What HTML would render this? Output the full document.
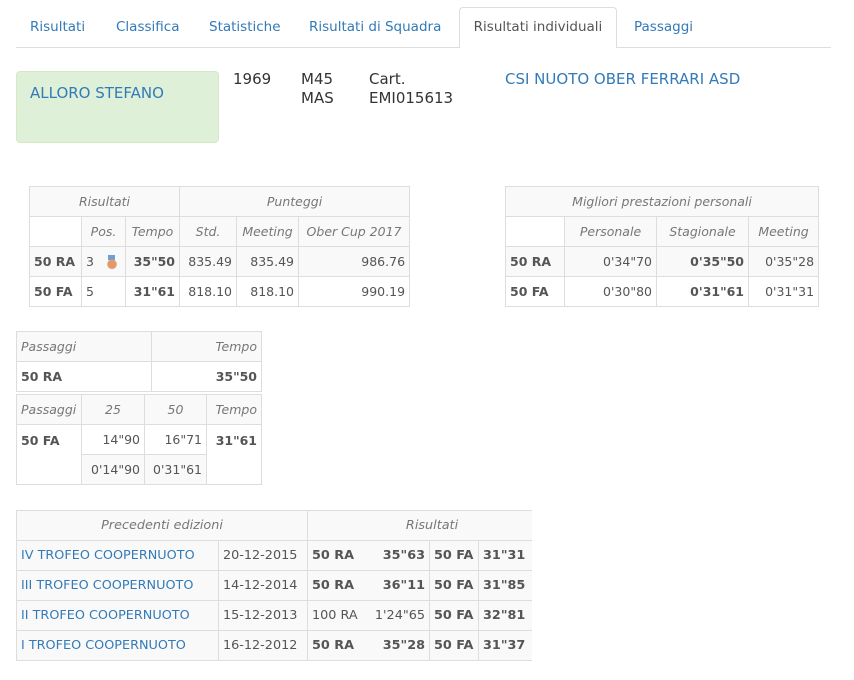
<!DOCTYPE html>
<html><head><meta charset="utf-8"><style>
body{margin:0;background:#fff;font-family:"DejaVu Sans","Liberation Sans",sans-serif;color:#555;width:854px;height:673px;position:relative;overflow:hidden}
a{color:#337ab7;text-decoration:none}
.nav{position:absolute;left:16px;top:47px;width:815px;border-top:1px solid #ddd}
.tab{position:absolute;top:19px;font-size:13.5px;color:#337ab7}
.act{position:absolute;left:459px;top:7px;width:158px;height:41px;border:1px solid #ddd;border-bottom:none;background:#fff;border-radius:4px 4px 0 0;font-size:13.5px;color:#555;box-sizing:border-box;padding-top:11px;text-align:center}
.green{position:absolute;left:16px;top:71px;width:203px;height:72px;box-sizing:border-box;background:#dff0d8;border:1px solid #d6e9c6;border-radius:4px;padding:12px 13px;font-size:15px;color:#337ab7}
.info{position:absolute;top:70px;font-size:15px;color:#333;line-height:19px}
table{position:absolute;border-collapse:collapse;table-layout:fixed;font-size:12.5px}
td{border:1px solid #ddd;padding:0 4px;height:29px;white-space:nowrap;overflow:hidden}
.h td,td.h{background:#f9f9f9;font-style:italic;color:#777}
.s td{background:#f9f9f9}
.c{text-align:center}.r{text-align:right}.b{font-weight:bold}
.t4{font-size:12.8px}
</style></head><body>
<span class="tab" style="left:30px">Risultati</span>
<span class="tab" style="left:116px">Classifica</span>
<span class="tab" style="left:209px">Statistiche</span>
<span class="tab" style="left:309px">Risultati di Squadra</span>
<span class="tab" style="left:634px">Passaggi</span>
<div class="nav"></div>
<div class="act">Risultati individuali</div>

<div class="green">ALLORO STEFANO</div>
<div class="info" style="left:233px">1969</div>
<div class="info" style="left:301px">M45<br>MAS</div>
<div class="info" style="left:369px">Cart.<br>EMI015613</div>
<div class="info" style="left:505px;color:#337ab7">CSI NUOTO OBER FERRARI ASD</div>

<table style="left:29px;top:186px;width:381px">
<col style="width:52px"><col style="width:44px"><col style="width:54px"><col style="width:57px"><col style="width:62px"><col style="width:111px">
<tr class="h"><td colspan="3" class="c">Risultati</td><td colspan="3" class="c">Punteggi</td></tr>
<tr><td></td><td class="c h">Pos.</td><td class="c h">Tempo</td><td class="c h">Std.</td><td class="c h">Meeting</td><td class="c h">Ober Cup 2017</td></tr>
<tr class="s"><td class="b">50 RA</td><td>3 <span style="display:inline-block;width:12px;height:14px;margin-left:8px;vertical-align:-3px;background:radial-gradient(circle at 50% 66%,#e39a6a 0 4.5px,transparent 5px),linear-gradient(#6fa0d0,#6fa0d0) center top/7px 5px no-repeat"></span></td><td class="r b">35"50</td><td class="r">835.49</td><td class="r">835.49</td><td class="r">986.76</td></tr>
<tr><td class="b">50 FA</td><td>5</td><td class="r b">31"61</td><td class="r">818.10</td><td class="r">818.10</td><td class="r">990.19</td></tr>
</table>

<table style="left:505px;top:186px;width:313px">
<col style="width:59px"><col style="width:92px"><col style="width:92px"><col style="width:70px">
<tr class="h"><td colspan="4" class="c">Migliori prestazioni personali</td></tr>
<tr><td></td><td class="c h">Personale</td><td class="c h">Stagionale</td><td class="c h">Meeting</td></tr>
<tr class="s"><td class="b">50 RA</td><td class="r">0'34"70</td><td class="r b">0'35"50</td><td class="r">0'35"28</td></tr>
<tr><td class="b">50 FA</td><td class="r">0'30"80</td><td class="r b">0'31"61</td><td class="r">0'31"31</td></tr>
</table>

<table style="left:16px;top:331px;width:245px">
<col style="width:135px"><col style="width:110px">
<tr class="h"><td>Passaggi</td><td class="r">Tempo</td></tr>
<tr><td class="b">50 RA</td><td class="r b">35"50</td></tr>
</table>
<table style="left:16px;top:394px;width:245px">
<col style="width:65px"><col style="width:63px"><col style="width:62px"><col style="width:55px">
<tr class="h"><td>Passaggi</td><td class="c">25</td><td class="c">50</td><td class="r">Tempo</td></tr>
<tr><td class="b" rowspan="2" style="vertical-align:top;padding-top:8px">50 FA</td><td class="r">14"90</td><td class="r">16"71</td><td class="r b" rowspan="2" style="vertical-align:top;padding-top:8px">31"61</td></tr>
<tr class="s"><td class="r">0'14"90</td><td class="r">0'31"61</td></tr>
</table>

<table class="t4" style="left:16px;top:510px;width:540px">
<col style="width:202px"><col style="width:89px"><col style="width:53px"><col style="width:69px"><col style="width:49px"><col style="width:78px">
<tr class="h"><td colspan="2" class="c">Precedenti edizioni</td><td colspan="4" class="c">Risultati</td></tr>
<tr class="s"><td><a>IV TROFEO COOPERNUOTO</a></td><td>20-12-2015</td><td class="b" style="border-right:none">50 RA</td><td class="r b" style="border-left:none">35"63</td><td class="b">50 FA</td><td class="b">31"31</td></tr>
<tr class="s"><td><a>III TROFEO COOPERNUOTO</a></td><td>14-12-2014</td><td class="b" style="border-right:none">50 RA</td><td class="r b" style="border-left:none">36"11</td><td class="b">50 FA</td><td class="b">31"85</td></tr>
<tr class="s"><td><a>II TROFEO COOPERNUOTO</a></td><td>15-12-2013</td><td style="border-right:none">100 RA</td><td class="r" style="border-left:none">1'24"65</td><td class="b">50 FA</td><td class="b">32"81</td></tr>
<tr class="s"><td><a>I TROFEO COOPERNUOTO</a></td><td>16-12-2012</td><td class="b" style="border-right:none">50 RA</td><td class="r b" style="border-left:none">35"28</td><td class="b">50 FA</td><td class="b">31"37</td></tr>
</table>
<div style="position:absolute;left:532px;top:500px;width:330px;height:180px;background:#fff"></div>
</body></html>
